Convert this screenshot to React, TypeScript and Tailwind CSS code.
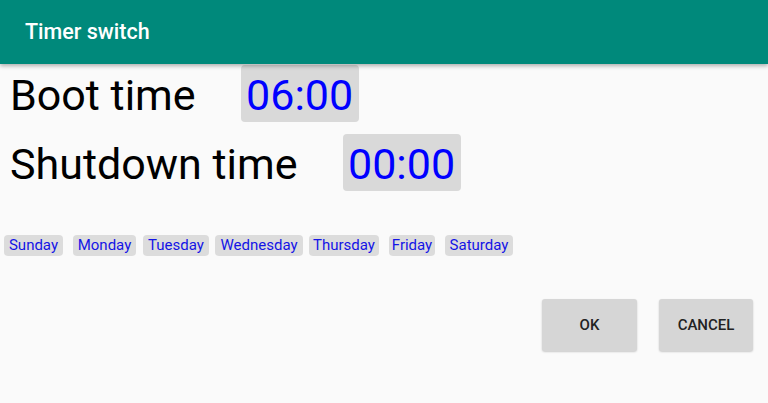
import React from "react";

const days = [
  { name: "Sunday", w: "w-[59px]", ml: "ml-[4px]" },
  { name: "Monday", w: "w-[63px]", ml: "ml-[10px]" },
  { name: "Tuesday", w: "w-[66px]", ml: "ml-[7px]" },
  { name: "Wednesday", w: "w-[88px]", ml: "ml-[6px]" },
  { name: "Thursday", w: "w-[70px]", ml: "ml-[6px]" },
  { name: "Friday", w: "w-[46px]", ml: "ml-[10px]" },
  { name: "Saturday", w: "w-[68px]", ml: "ml-[10px]" },
];

function TimeRow({ label, time }: { label: string; time: string }) {
  return (
    <div className="flex items-center">
      <span className="pl-[10px] pt-[3px] text-[43px] leading-none text-black">{label}</span>
      <button className="ml-[45px] flex h-[57px] w-[118px] items-center justify-center rounded-[4px] bg-[#d9d9d9] pt-[3px] text-[43px] leading-none text-[#0000ff]">
        {time}
      </button>
    </div>
  );
}

export default function App() {
  return (
    <div className="h-[403px] w-[768px] overflow-hidden bg-[#fafafa] font-['Roboto',sans-serif]">
      <header className="relative z-10 flex h-16 items-center bg-[#00897b] px-[25px] shadow-[0_2px_4px_rgba(0,0,0,0.3)]">
        <h1 className="text-[21.5px] font-medium text-white">Timer switch</h1>
      </header>

      <div className="flex flex-col gap-[12px] pt-[1px]">
        <TimeRow label="Boot time" time="06:00" />
        <TimeRow label="Shutdown time" time="00:00" />
      </div>

      <div className="mt-[44px] flex">
        {days.map((d) => (
          <span
            key={d.name}
            className={`${d.w} ${d.ml} flex h-[21px] items-center justify-center rounded-[4px] bg-[#dcdcdc] text-[15px] text-[#1414e6]`}
          >
            {d.name}
          </span>
        ))}
      </div>

      <div className="mt-[43px] flex justify-end gap-[22px] pr-[15px]">
        <button className="h-[52px] w-[95px] rounded-[3px] bg-[#d6d6d6] text-[15px] font-medium text-[#222] shadow-[0_1px_2px_rgba(0,0,0,0.2)]">
          OK
        </button>
        <button className="h-[52px] w-[94px] rounded-[3px] bg-[#d6d6d6] text-[15px] font-medium text-[#222] shadow-[0_1px_2px_rgba(0,0,0,0.2)]">
          CANCEL
        </button>
      </div>
    </div>
  );
}
